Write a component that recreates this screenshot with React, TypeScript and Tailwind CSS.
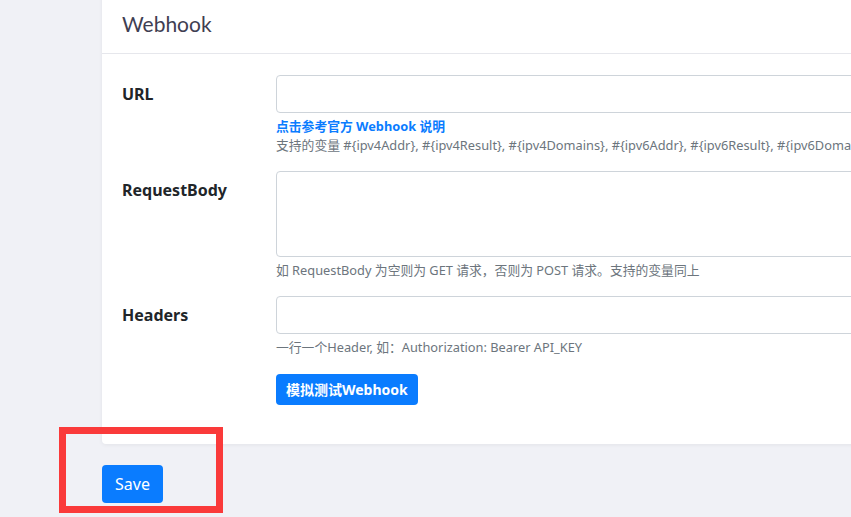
import { useState } from "react";

const fieldClass =
  "block w-full rounded-[4px] border border-[#ced4da] bg-white px-3 text-base text-[#495057] outline-none";

const Row = ({ label, children }: { label: string; children: React.ReactNode }) => (
  <div className="mb-4 grid grid-cols-[154px_1fr]">
    <label className="pt-[7px] text-base leading-6 font-bold text-[#212529]">{label}</label>
    <div>{children}</div>
  </div>
);

const Hint = ({ children }: { children: React.ReactNode }) => (
  <small className="block text-[12.8px] leading-[19px] text-[#6c757d]">{children}</small>
);

const App = () => {
  const [url, setUrl] = useState("");
  const [body, setBody] = useState("");
  const [headers, setHeaders] = useState("");

  return (
    <div
      className="relative h-[517px] w-[851px] overflow-hidden bg-[#f0f1f6] pl-[102px]"
      style={{ fontFamily: '"Noto Sans", "Noto Sans CJK SC", sans-serif' }}
    >
      <div className="-mt-[6px] w-[1000px] rounded-[4px] bg-white shadow-[0_1px_4px_rgba(0,0,0,0.06)]">
        <div className="flex h-[60px] items-end border-b border-[#e6e7ec] px-5 pb-[17px]">
          <h5 className="text-[21px] leading-6 text-[#3f3e52]" style={{ fontFamily: "Lato, sans-serif" }}>
            Webhook
          </h5>
        </div>

        <div className="px-5 pt-[21px] pb-[39px]">
          <Row label="URL">
            <input
              className={`${fieldClass} h-[38px]`}
              value={url}
              onChange={(e) => setUrl(e.target.value)}
            />
            <div className="mt-1">
              <a href="#" className="block text-[12.8px] leading-[19px] font-bold text-[#0a7cff]">
                点击参考官方 Webhook 说明
              </a>
              <Hint>
                支持的变量 #&#123;ipv4Addr&#125;, #&#123;ipv4Result&#125;, #&#123;ipv4Domains&#125;,
                #&#123;ipv6Addr&#125;, #&#123;ipv6Result&#125;, #&#123;ipv6Domains&#125;
              </Hint>
            </div>
          </Row>

          <Row label="RequestBody">
            <textarea
              className={`${fieldClass} h-[86px] resize-none py-[6px]`}
              value={body}
              onChange={(e) => setBody(e.target.value)}
            />
            <div className="mt-1">
              <Hint>如 RequestBody 为空则为 GET 请求，否则为 POST 请求。支持的变量同上</Hint>
            </div>
          </Row>

          <Row label="Headers">
            <input
              className={`${fieldClass} h-[38px]`}
              value={headers}
              onChange={(e) => setHeaders(e.target.value)}
            />
            <div className="mt-1">
              <Hint>一行一个Header, 如：Authorization: Bearer API_KEY</Hint>
            </div>
          </Row>

          <div className="grid grid-cols-[154px_1fr]">
            <div />
            <div>
              <button className="mt-px h-[31px] rounded-[4px] bg-[#0a7cff] px-[10px] text-sm font-bold text-white">
                模拟测试Webhook
              </button>
            </div>
          </div>
        </div>
      </div>

      <button className="mt-[21px] h-[38px] rounded-[4px] bg-[#0a7cff] px-[13px] text-base text-white">
        Save
      </button>

      {/* annotation box */}
      <div className="absolute top-[427px] left-[59px] h-[86px] w-[164px] border-[7px] border-[#fa3a3a]" />
    </div>
  );
};

export default App;
